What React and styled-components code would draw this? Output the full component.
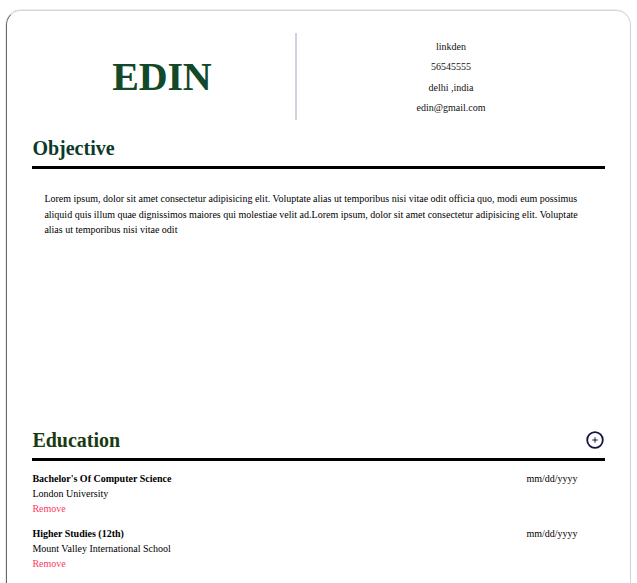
import React from "react";
import styled, { createGlobalStyle } from "styled-components";

const Global = createGlobalStyle`
  html, body { margin: 0; padding: 0; background: #fff; overflow: hidden; }
  body { font-family: "Liberation Serif", "Times New Roman", serif; color: #000; }
  * { box-sizing: border-box; }
`;

const Card = styled.div`
  width: 98%;
  margin: 10px auto 0;
  padding: 22px 25px 40px 25px;
  border: 1px solid #d2d2d2;
  border-left-color: #666;
  border-top-color: #d6d6d6;
  border-radius: 15px;
  min-height: 600px;
  box-shadow: -0.5px -0.5px 0 rgba(0,0,0,0.15);
`;

const Header = styled.header`
  display: flex;
  height: 87px;
`;

const NameBox = styled.div`
  width: 265px;
  padding-right: 4px;
  border-right: 2px solid #cfd4dc;
  display: flex;
  align-items: center;
  justify-content: center;
`;

const Name = styled.h1`
  margin: 0;
  font-size: 40px;
  font-weight: bold;
  color: #12492a;
  letter-spacing: -0.2px;
`;

const Contact = styled.div`
  flex: 1;
  display: flex;
  flex-direction: column;
  align-items: center;
  justify-content: center;
  padding-top: 2px;
`;

const ContactLine = styled.div`
  font-size: 10px;
  line-height: 20.4px;
  color: #111;
`;

const SectionHead = styled.div`
  display: flex;
  align-items: center;
  justify-content: space-between;
  margin-top: ${(p) => p.$top}px;
  padding-bottom: 6px;
  border-bottom: 3px solid #000;
`;

const SectionTitle = styled.h2`
  margin: 0;
  font-size: 20px;
  line-height: 24px;
  font-weight: bold;
  color: ${(p) => p.$color};
`;

const AddButton = styled.button`
  border: none;
  background: none;
  padding: 0;
  margin-right: 1px;
  width: 18px;
  height: 18px;
  display: flex;
  cursor: pointer;
`;

const ObjectiveText = styled.p`
  margin: 0;
  padding: 22px 20px 0 12px;
  min-height: 243px;
  font-size: 10px;
  line-height: 15.5px;
`;

const ItemList = styled.div`
  display: flex;
  flex-direction: column;
  gap: 10px;
  padding-top: 10px;
`;

const Item = styled.div`
  font-size: 10px;
  line-height: 15px;
`;

const ItemRow = styled.div`
  display: flex;
  justify-content: space-between;
`;

const ItemTitle = styled.div`
  font-weight: bold;
`;

const DateText = styled.div`
  padding-right: 27px;
`;

const Remove = styled.div`
  color: #ff3a62;
  cursor: pointer;
`;

const education = [
  { title: "Bachelor's Of Computer Science", place: "London University" },
  { title: "Higher Studies (12th)", place: "Mount Valley International School" },
];

export default function App() {
  return (
    <>
      <Global />
      <Card>
        <Header>
          <NameBox>
            <Name>EDIN</Name>
          </NameBox>
          <Contact>
            <ContactLine>linkden</ContactLine>
            <ContactLine>56545555</ContactLine>
            <ContactLine>delhi ,india</ContactLine>
            <ContactLine>edin@gmail.com</ContactLine>
          </Contact>
        </Header>

        <SectionHead $top={16}>
          <SectionTitle $color="#0b3a28">Objective</SectionTitle>
        </SectionHead>
        <ObjectiveText>
          Lorem ipsum, dolor sit amet consectetur adipisicing elit. Voluptate alias ut temporibus nisi vitae odit officia quo, modi eum possimus aliquid quis illum quae dignissimos maiores qui molestiae velit ad.Lorem ipsum, dolor sit amet consectetur adipisicing elit. Voluptate alias ut temporibus nisi vitae odit
        </ObjectiveText>

        <SectionHead $top={16}>
          <SectionTitle $color="#1a3a12">Education</SectionTitle>
          <AddButton aria-label="add">
            <svg width="18" height="18" viewBox="0 0 18 18">
              <circle cx="9" cy="9" r="7.8" fill="none" stroke="#14143f" strokeWidth="1.8" />
              <path d="M9 6.3v5.4M6.3 9h5.4" stroke="#14143f" strokeWidth="1" />
            </svg>
          </AddButton>
        </SectionHead>
        <ItemList>
          {education.map((e) => (
            <Item key={e.title}>
              <ItemRow>
                <ItemTitle>{e.title}</ItemTitle>
                <DateText>mm/dd/yyyy</DateText>
              </ItemRow>
              <div>{e.place}</div>
              <Remove>Remove</Remove>
            </Item>
          ))}
        </ItemList>
      </Card>
    </>
  );
}
